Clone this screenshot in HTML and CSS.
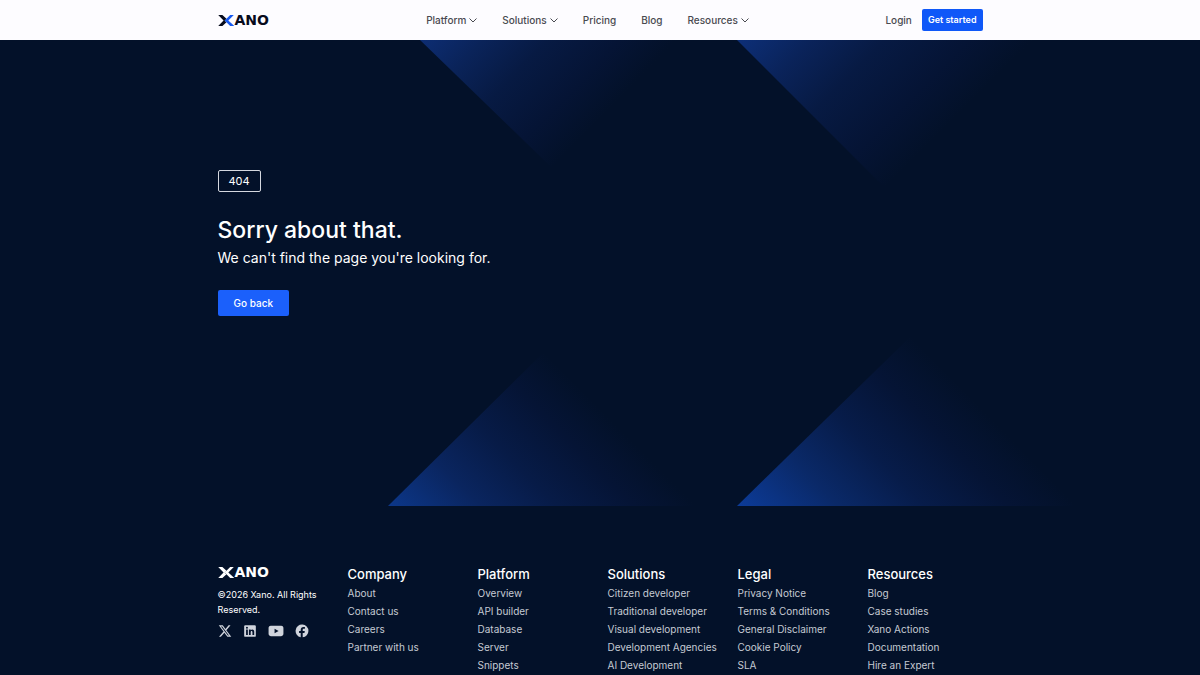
FILE: index.html
```html
<!DOCTYPE html>
<html lang="en">
<head>
<meta charset="utf-8">
<meta name="viewport" content="width=device-width, initial-scale=1">
<title>Xano | Not found</title>
<link rel="stylesheet" href="styles.css">
</head>
<body>
<header class="header">
  <div class="container header-row">
    <a class="logo" href="#"><svg class="logo-mark" viewBox="0 0 18 12" aria-hidden="true"><path class="logo-left" d="M0 0h4.500L9 4.200 7 6.200 9 8 4.500 12H0l5.800-5.900z"/><path class="logo-right" d="M17 0h-4L7 6l6 6h4.500L11 6z"/></svg><span class="logo-text">ANO</span></a>
    <nav class="nav" aria-label="Main">
      <button class="nav-item" type="button">Platform <svg class="chevron" viewBox="0 0 8 5"><path d="M.5.5 4 4 7.500.5"/></svg></button>
      <button class="nav-item" type="button">Solutions <svg class="chevron" viewBox="0 0 8 5"><path d="M.5.5 4 4 7.500.5"/></svg></button>
      <a class="nav-item" href="#">Pricing</a>
      <a class="nav-item" href="#">Blog</a>
      <button class="nav-item" type="button">Resources <svg class="chevron" viewBox="0 0 8 5"><path d="M.5.5 4 4 7.500.5"/></svg></button>
    </nav>
    <div class="actions">
      <a class="nav-item" href="#">Login</a>
      <a class="button button-small" href="#">Get started</a>
    </div>
  </div>
</header>
<main class="hero">
  <svg class="rays" viewBox="0 0 1200 466" preserveAspectRatio="xMidYMax slice" aria-hidden="true">
    <defs>
      <linearGradient id="a" gradientUnits="userSpaceOnUse" x1="420" y1="0" x2="552" y2="128"><stop offset="0" stop-color="#0d2d73"/><stop offset=".25" stop-color="#0a2359"/><stop offset=".5" stop-color="#071a43"/><stop offset=".78" stop-color="#051435"/><stop offset="1" stop-color="#031129"/></linearGradient>
      <linearGradient id="b" gradientUnits="userSpaceOnUse" x1="737" y1="0" x2="885" y2="148"><stop offset="0" stop-color="#0d2f78"/><stop offset=".25" stop-color="#0a235a"/><stop offset=".5" stop-color="#071a43"/><stop offset=".78" stop-color="#051435"/><stop offset="1" stop-color="#031129"/></linearGradient>
      <linearGradient id="c" gradientUnits="userSpaceOnUse" x1="388" y1="466" x2="544" y2="312"><stop offset="0" stop-color="#0c3789"/><stop offset=".3" stop-color="#0a255f"/><stop offset=".55" stop-color="#071b47"/><stop offset=".8" stop-color="#051435"/><stop offset="1" stop-color="#031129"/></linearGradient>
      <linearGradient id="d" gradientUnits="userSpaceOnUse" x1="737" y1="466" x2="911" y2="296"><stop offset="0" stop-color="#0c3b98"/><stop offset=".3" stop-color="#0a2968"/><stop offset=".55" stop-color="#071c4a"/><stop offset=".8" stop-color="#051435"/><stop offset="1" stop-color="#031129"/></linearGradient>
    </defs>
    <path fill="url(#a)" d="M420 0 552 128 690 0z"/>
    <path fill="url(#b)" d="M737 0 885 148 1040 0z"/>
    <path fill="url(#c)" d="M388 466 544 312 704 466z"/>
    <path fill="url(#d)" d="M737 466 911 296 1090 466z"/>
  </svg>
  <div class="container hero-body">
    <div class="code">404</div>
    <h1 class="title">Sorry about that.</h1>
    <p class="lead">We can't find the page you're looking for.</p>
    <button class="button button-large" type="button">Go back</button>
  </div>
</main>
<footer class="footer">
  <div class="container footer-grid">
    <div class="brand">
      <a class="logo logo-light" href="#"><svg class="logo-mark" viewBox="0 0 18 12" aria-hidden="true"><path class="logo-left" d="M0 0h4.500L9 4.200 7 6.200 9 8 4.500 12H0l5.800-5.900z"/><path class="logo-right" d="M17 0h-4L7 6l6 6h4.500L11 6z"/></svg><span class="logo-text">ANO</span></a>
      <p class="copyright">©2026 Xano. All Rights Reserved.</p>
      <div class="social">
        <a href="#" aria-label="X"><svg viewBox="0 0 24 24"><path d="M18.200 2.300h3.300l-7.200 8.200 8.500 11.200h-6.700l-5.200-6.800-6 6.800H1.700l7.700-8.800L1.300 2.300h6.800l4.700 6.200zm-1.200 17.500h1.800L7.100 4.100h-2z"/></svg></a>
        <a href="#" aria-label="LinkedIn"><svg viewBox="0 0 24 24"><path fill-rule="evenodd" d="M4 2h16a2 2 0 0 1 2 2v16a2 2 0 0 1-2 2H4a2 2 0 0 1-2-2V4a2 2 0 0 1 2-2zm1.300 7.500V19h3V9.500zM6.800 4.800a1.700 1.700 0 1 0 0 3.400 1.700 1.700 0 0 0 0-3.400zM10.200 9.500V19h3v-5c0-2.800 3-2.700 3 0v5h3v-6c0-4-4.300-4.600-6-2.100V9.500z"/></svg></a>
        <a href="#" aria-label="YouTube"><svg class="wide" viewBox="0 0 28 24"><path fill-rule="evenodd" d="M5 3h18c3 0 4 2 4 4v10c0 2-1 4-4 4H5c-3 0-4-2-4-4V7c0-2 1-4 4-4zm6.500 5v8l7-4z"/></svg></a>
        <a href="#" aria-label="Facebook"><svg viewBox="0 0 24 24"><path d="M23 12a11 11 0 1 0-13.200 10.800v-7.500H7V12h2.800v-1.800c0-3.700 1.700-5.200 4.700-5.200.9 0 1.800.1 2.500.3v2.900h-1.700c-1.500 0-2.100.7-2.100 2V12h3.600l-.6 3.300h-3v7.600A11 11 0 0 0 23 12z"/></svg></a>
      </div>
    </div>
    <div class="col"><h2>Company</h2><a href="#">About</a><a href="#">Contact us</a><a href="#">Careers</a><a href="#">Partner with us</a></div>
    <div class="col"><h2>Platform</h2><a href="#">Overview</a><a href="#">API builder</a><a href="#">Database</a><a href="#">Server</a><a href="#">Snippets</a></div>
    <div class="col"><h2>Solutions</h2><a href="#">Citizen developer</a><a href="#">Traditional developer</a><a href="#">Visual development</a><a href="#">Development Agencies</a><a href="#">AI Development</a></div>
    <div class="col"><h2>Legal</h2><a href="#">Privacy Notice</a><a href="#">Terms &amp; Conditions</a><a href="#">General Disclaimer</a><a href="#">Cookie Policy</a><a href="#">SLA</a></div>
    <div class="col"><h2>Resources</h2><a href="#">Blog</a><a href="#">Case studies</a><a href="#">Xano Actions</a><a href="#">Documentation</a><a href="#">Hire an Expert</a></div>
  </div>
</footer>
</body>
</html>
```
FILE: styles.css
```css
* { box-sizing: border-box; }
body {
  margin: 0;
  background: #031129;
  color: #fff;
  font-family: Inter, "Liberation Sans", sans-serif;
  font-size: 10px;
}
a { color: inherit; text-decoration: none; }
button { font: inherit; color: inherit; border: 0; padding: 0; background: none; cursor: pointer; }
h1, h2, p { margin: 0; }
.container { width: 100%; max-width: 765px; margin: 0 auto; }

.header { background: #fdfcff; }
.header-row {
  display: grid;
  grid-template-columns: 1fr auto 1fr;
  align-items: center;
  height: 40px;
}
.logo { display: flex; align-items: center; color: #070b1c; }
.logo-mark { width: 17px; height: 11px; }
.logo-left { fill: currentColor; }
.logo-right { fill: #1759f0; }
.logo-text { font: bold 14px/14px "DejaVu Sans", sans-serif; }
.logo-light { color: #fff; }
.logo-light .logo-right { fill: #fff; }
.nav { display: flex; gap: 25px; padding-right: 25px; }
.nav-item {
  display: flex;
  align-items: center;
  gap: 3px;
  color: #494a50;
  font-size: 10px;
  font-weight: 500;
  line-height: 16px;
}
.chevron { width: 8px; height: 5px; fill: none; stroke: currentColor; }
.actions { display: flex; align-items: center; justify-content: flex-end; gap: 10px; }
.button { background: #1b60fb; color: #fff; border-radius: 2px; font-weight: 500; }
.button-small { padding: 4px 6px; font-size: 9px; font-weight: 600; line-height: 14px; background: #0f58f8; }
.button-large { padding: 5px 16px; font-size: 10px; line-height: 16px; }

.hero { position: relative; padding: 130px 0 190px; }
.rays { position: absolute; inset: 0; width: 100%; height: 100%; }
.hero-body { position: relative; display: flex; flex-direction: column; align-items: flex-start; }
.code { padding: 1px 10px; border: 1px solid #d5d8df; border-radius: 2px; font-size: 11px; line-height: 18px; }
.title { margin-top: 22px; font-size: 23px; font-weight: 500; line-height: 32px; }
.lead { margin: 2px 0 22px; font-size: 14px; line-height: 20px; }

.footer { padding: 59px 0 60px; }
.footer-grid { display: grid; grid-template-columns: repeat(6, 1fr); gap: 15px; }
.copyright { margin-top: 8px; font-size: 9px; line-height: 15px; }
.social { display: flex; gap: 11px; padding-top: 7px; color: #d0d4dc; }
.social svg { display: block; width: 14px; height: 14px; fill: currentColor; }
.social .wide { width: 16px; }
.col { display: flex; flex-direction: column; align-items: flex-start; white-space: nowrap; }
.col h2 { margin-bottom: 1px; font-size: 13px; font-weight: 500; line-height: 18px; }
.col a { color: #c5cad3; font-size: 10px; line-height: 18px; }
```
